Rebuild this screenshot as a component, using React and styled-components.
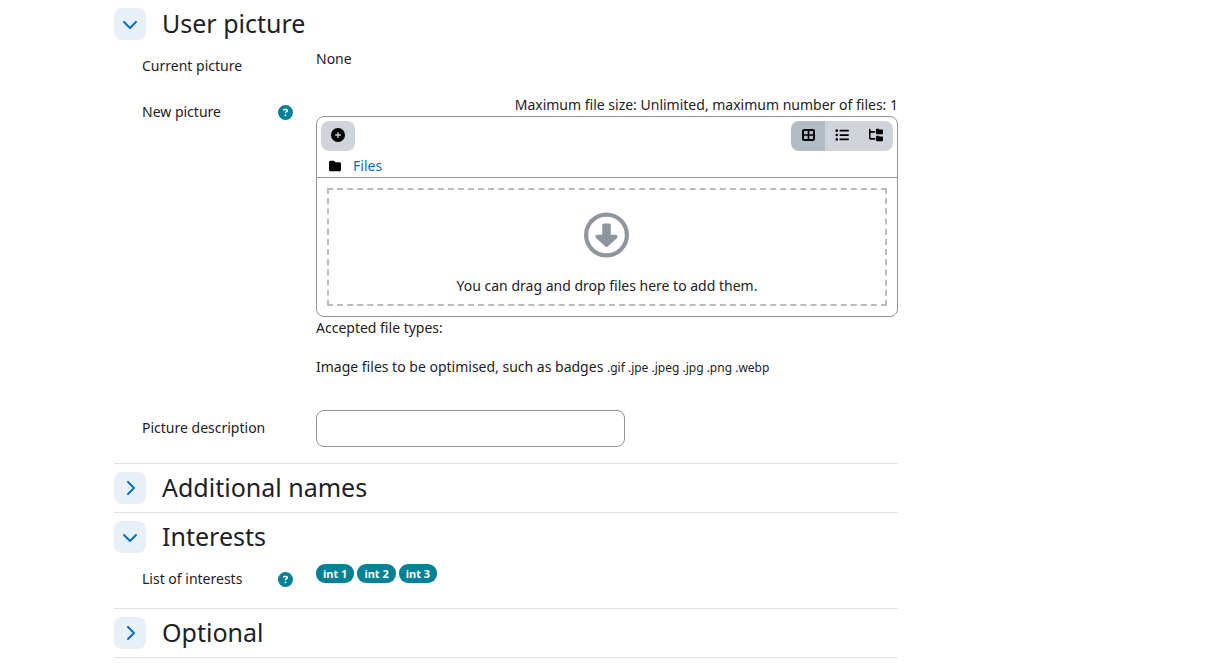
import React, { useState } from 'react';
import styled, { createGlobalStyle } from 'styled-components';
import {
  FaChevronDown,
  FaChevronRight,
  FaCirclePlus,
  FaCircleQuestion,
  FaFolder,
  FaFolderTree,
  FaListUl,
} from 'react-icons/fa6';

const FILE_TYPES = ['.gif', '.jpe', '.jpeg', '.jpg', '.png', '.webp'];
const INTERESTS = ['int 1', 'int 2', 'int 3'];
const VIEWS = [
  { id: 'icons', title: 'Display folder with file icons', Icon: GridIcon },
  { id: 'list', title: 'Display folder with file details', Icon: FaListUl },
  { id: 'tree', title: 'Display folder as file tree', Icon: FaFolderTree },
];

function GridIcon() {
  return (
    <svg width={'14'} height={'14'} viewBox={'0 0 14 14'} fill={'none'} stroke={'currentColor'}>
      <rect x={'2'} y={'2'} width={'11'} height={'10'} rx={'1'} strokeWidth={'2'}/>
      <path d={'M7.5 2v10M2 7h11'} strokeWidth={'1.6'}/>
    </svg>
  )
}

function DropArrow() {
  return (
    <svg width={'46'} height={'46'} viewBox={'0 0 46 46'} fill={'none'} stroke={'currentColor'}>
      <circle cx={'22.5'} cy={'23'} r={'20.4'} strokeWidth={'4.2'}/>
      <path
        d={'M20 13.2h5v11.400h6.800L22.500 33.200l-9.300-8.600H20z'}
        fill={'currentColor'}
        strokeWidth={'3.6'}
        strokeLinejoin={'round'}
      />
    </svg>
  )
}

function Section({ title, defaultOpen = false, children }) {
  const [open, setOpen] = useState(defaultOpen);

  return (
    <Fieldset>
      <SectionHeader>
        <Toggle
          type={'button'}
          aria-expanded={open}
          aria-label={title}
          onClick={() => setOpen(!open)}
        >
          {open ? <FaChevronDown/> : <FaChevronRight/>}
        </Toggle>
        <SectionTitle>{title}</SectionTitle>
      </SectionHeader>
      {open && children && <SectionBody>{children}</SectionBody>}
    </Fieldset>
  )
}

function Help({ topic }) {
  return (
    <HelpButton type={'button'} aria-label={`Help with ${topic}`}>
      <FaCircleQuestion/>
    </HelpButton>
  )
}

function FileManager() {
  const [view, setView] = useState('icons');

  return (
    <Manager>
      <Toolbar>
        <ToolButton type={'button'} title={'Add...'} $single>
          <FaCirclePlus/>
        </ToolButton>
        <ViewGroup>
          {VIEWS.map(({ id, title, Icon }) => (
            <ToolButton
              key={id}
              type={'button'}
              title={title}
              $active={view === id}
              onClick={() => setView(id)}
            >
              <Icon/>
            </ToolButton>
          ))}
        </ViewGroup>
      </Toolbar>
      <PathBar>
        <FaFolder/>
        <a href={'#files'}>Files</a>
      </PathBar>
      <DropArea>
        <DropZone>
          <DropArrow/>
          <span>You can drag and drop files here to add them.</span>
        </DropZone>
      </DropArea>
    </Manager>
  )
}

export default function App() {
  return (
    <>
      <GlobalStyle/>
      <Form>
        <Section title={'User picture'} defaultOpen>
          <Row>
            <LabelCell>
              <span>Current picture</span>
            </LabelCell>
            <div>None</div>
          </Row>
          <Row>
            <LabelCell>
              <span>New picture</span>
              <Help topic={'New picture'}/>
            </LabelCell>
            <div>
              <Restrictions>
                Maximum file size: Unlimited, maximum number of files: 1
              </Restrictions>
              <FileManager/>
              <div>Accepted file types:</div>
              <Accepted>
                Image files to be optimised, such as badges{' '}
                <small>{FILE_TYPES.join(' ')}</small>
              </Accepted>
            </div>
          </Row>
          <Row>
            <LabelCell>
              <label htmlFor={'imagealt'}>Picture description</label>
            </LabelCell>
            <div>
              <TextInput id={'imagealt'} type={'text'}/>
            </div>
          </Row>
        </Section>
        <Section title={'Additional names'}/>
        <Section title={'Interests'} defaultOpen>
          <Row>
            <LabelCell>
              <span>List of interests</span>
              <Help topic={'List of interests'}/>
            </LabelCell>
            <Tags>
              {INTERESTS.map((name) => <Tag key={name}>{name}</Tag>)}
            </Tags>
          </Row>
        </Section>
        <Section title={'Optional'}/>
      </Form>
    </>
  )
}

const GlobalStyle = createGlobalStyle`
  * {
    box-sizing: border-box;
  }

  body {
    margin: 0;
    background: #fff;
    color: #1d2125;
    font-family: "Noto Sans", "Open Sans", sans-serif;
    font-size: 14px;
    line-height: 22px;
  }

  a {
    color: #0f6cbf;
    text-decoration: none;
  }

  button, input {
    font: inherit;
  }
`

const Form = styled.form`
  max-width: 784px;
  margin: 0 24px 0 114px;
`

const Fieldset = styled.section`
  border-bottom: 1px solid #dee2e6;
`

const SectionHeader = styled.div`
  display: flex;
  align-items: flex-start;
  gap: 16px;
  padding: 8px 0;
`

const Toggle = styled.button`
  display: flex;
  align-items: center;
  justify-content: center;
  width: 32px;
  height: 32px;
  padding: 0;
  border: 0;
  border-radius: 8px;
  background: #e7f0f9;
  color: #0f6cbf;
  font-size: 16px;
  cursor: pointer;
`

const SectionTitle = styled.h3`
  margin: 0;
  font-size: 25px;
  font-weight: 400;
  line-height: 30px;
`

const SectionBody = styled.div`
  padding-left: 28px;
`

const Row = styled.div`
  display: grid;
  grid-template-columns: 151px minmax(0, 1fr);
  column-gap: 23px;
  padding-bottom: 16px;
`

const LabelCell = styled.div`
  display: flex;
  align-items: center;
  justify-content: space-between;
  align-self: start;
  padding: 7px 0 1px;
`

const HelpButton = styled.button`
  display: flex;
  padding: 0;
  border: 0;
  background: none;
  color: #008196;
  font-size: 15px;
  cursor: pointer;
`

const Restrictions = styled.div`
  text-align: right;
`

const Manager = styled.div`
  border: 1px solid #8f959e;
  border-radius: 8px;
`

const Toolbar = styled.div`
  display: flex;
  justify-content: space-between;
  padding: 4px 4px 0;
`

const ToolButton = styled.button`
  display: flex;
  align-items: center;
  justify-content: center;
  width: 34px;
  height: 30px;
  padding: 0 0 2px;
  border: 0;
  border-radius: ${({ $single }) => $single ? '8px' : '0'};
  background: ${({ $active }) => $active ? '#b1bbc4' : '#ced4da'};
  color: #000;
  font-size: 14px;
  cursor: pointer;
`

const ViewGroup = styled.div`
  display: flex;
  overflow: hidden;
  border-radius: 8px;
`

const PathBar = styled.div`
  display: flex;
  align-items: center;
  gap: 12px;
  padding: 4px 12px 0;
  border-bottom: 1px solid #8f959e;

  svg {
    color: #000;
    font-size: 12px;
  }
`

const DropArea = styled.div`
  padding: 10px;
`

const DropZone = styled.div`
  display: flex;
  flex-direction: column;
  align-items: center;
  gap: 17px;
  padding: 22px 8px 7px;
  border: 2px dashed #bbb;

  svg {
    color: #8f959e;
  }
`

const Accepted = styled.div`
  padding: 17px 0 15px;

  small {
    font-size: 12px;
  }
`

const TextInput = styled.input`
  display: block;
  width: 309px;
  max-width: 100%;
  height: 37px;
  padding: 6px 12px;
  border: 1px solid #8f959e;
  border-radius: 8px;
  background: #fff;
  color: #495057;
`

const Tags = styled.div`
  display: flex;
  align-items: flex-start;
  gap: 3px;
  padding: 3px 0 9px;
`

const Tag = styled.span`
  padding: 0 7px;
  border-radius: 9px;
  background: #008196;
  color: #fff;
  font-size: 11px;
  font-weight: 700;
  line-height: 19px;
`
